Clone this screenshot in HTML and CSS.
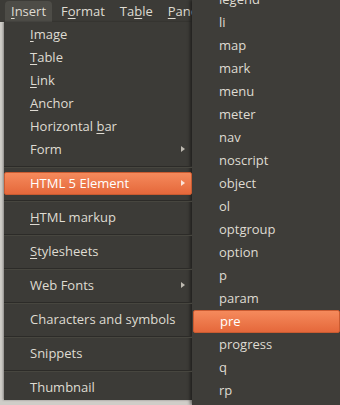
FILE: index.html
```html
<!DOCTYPE html>
<html lang="en">
<head>
  <meta charset="UTF-8">
  <title>Insert menu</title>
  <link rel="stylesheet" href="styles.css">
</head>
<body>
  <div class="left">
    <div class="menubar">
      <span class="top open"><u>I</u>nsert</span>
      <span class="top">F<u>o</u>rmat</span>
      <span class="top">Ta<u>b</u>le</span>
      <span class="top"><u>P</u>anels</span>
    </div>
    <div class="menu">
      <div class="item"><u>I</u>mage</div>
      <div class="item"><u>T</u>able</div>
      <div class="item"><u>L</u>ink</div>
      <div class="item"><u>A</u>nchor</div>
      <div class="item">Horizontal <u>b</u>ar</div>
      <div class="item sub">Form</div>
      <div class="sep"></div>
      <div class="item sub active">HTML 5 Element</div>
      <div class="sep"></div>
      <div class="item"><u>H</u>TML markup</div>
      <div class="sep"></div>
      <div class="item"><u>S</u>tylesheets</div>
      <div class="sep"></div>
      <div class="item sub">Web Fonts</div>
      <div class="sep"></div>
      <div class="item">Characters and symbols</div>
      <div class="sep"></div>
      <div class="item">Snippets</div>
      <div class="sep"></div>
      <div class="item">Thumbnail</div>
    </div>
  </div>
  <div class="submenu">
    <div class="list">
      <div class="item">legend</div>
      <div class="item">li</div>
      <div class="item">map</div>
      <div class="item">mark</div>
      <div class="item">menu</div>
      <div class="item">meter</div>
      <div class="item">nav</div>
      <div class="item">noscript</div>
      <div class="item">object</div>
      <div class="item">ol</div>
      <div class="item">optgroup</div>
      <div class="item">option</div>
      <div class="item">p</div>
      <div class="item">param</div>
      <div class="item active">pre</div>
      <div class="item">progress</div>
      <div class="item">q</div>
      <div class="item">rp</div>
    </div>
  </div>
</body>
</html>
```

FILE: styles.css
```css
body, html { margin:0; padding:0; width:340px; height:405px; overflow:hidden; }
body { display:flex; background:#cfcdc8; font-family: "Open Sans", sans-serif; font-size:13px; color:#dfdbd2; }
u { text-decoration: underline; text-underline-offset: 2px; }

.left { width:192px; display:flex; flex-direction:column; }
.menubar { height:22px; background:#3c3b37; display:flex; align-items:flex-end; padding-left:5px; white-space:nowrap; }
.top { height:21px; line-height:20px; padding:0 6px 0 6px; margin-right:3px; }
.open { background:#4d4c47; border-radius:4px 4px 0 0; }

.menu { margin-left:4px; background:#3c3b37; padding-top:1px; box-shadow:-1px 0 2px rgba(0,0,0,0.35); height:377px; }
.item { height:23px; line-height:22px; padding-left:26px; box-sizing:border-box; position:relative; white-space:nowrap; }
.sub::after { content:""; position:absolute; right:7px; top:8px; border-left:4px solid #bdb9b0; border-top:3px solid transparent; border-bottom:3px solid transparent; }
.sep { height:11px; position:relative; }
.sep::before { content:""; position:absolute; left:0; right:0; top:5px; height:1px; background:#2c2b28; border-bottom:1px solid #47463f; }
.active { color:#fff; background:linear-gradient(#f58a5c, #e5683b); border:1px solid #c95b31; border-radius:2px; line-height:20px; padding-left:25px; }
.menu .active::after { border-left-color:#fbe3d8; right:6px; top:7px; }

.submenu { width:148px; height:405px; background:#3e3d39; box-shadow:-2px 0 3px rgba(0,0,0,0.45); overflow:hidden; }
.list { margin-top:-12px; }
.submenu .item { padding-left:27px; }
.submenu .active { padding-left:26px; margin-left:1px; }
```
